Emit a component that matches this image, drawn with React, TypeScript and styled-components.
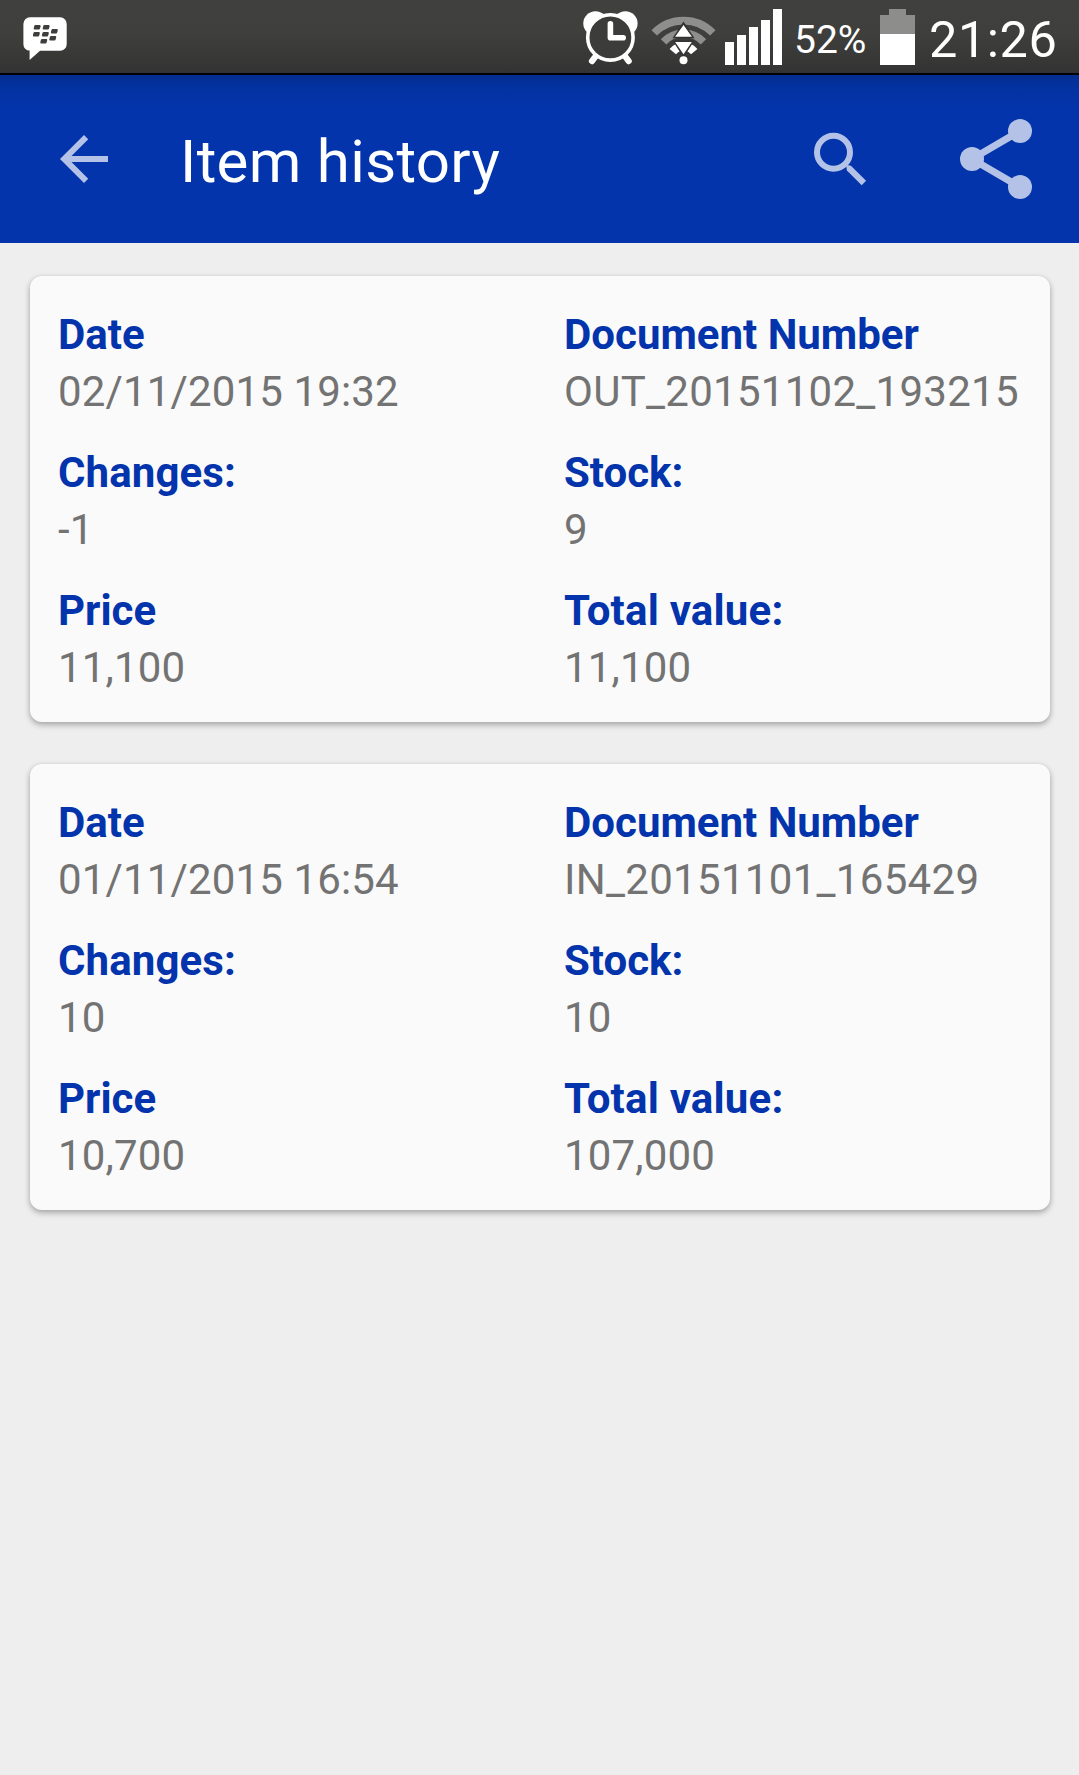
import React from "react";
import styled, { createGlobalStyle } from "styled-components";

const GlobalStyle = createGlobalStyle`
  * { box-sizing: border-box; }
  body {
    margin: 0;
    background: #eeeeee;
    font-family: Roboto, "Noto Sans", sans-serif;
  }
`;

const Screen = styled.div`
  display: flex;
  flex-direction: column;
  width: 1079px;
  min-height: 1775px;
  background: #eeeeee;
`;

const StatusBar = styled.header`
  display: flex;
  align-items: flex-start;
  justify-content: space-between;
  height: 75px;
  padding: 0 21px;
  color: #fff;
  border-bottom: 2px solid #000;
  background: linear-gradient(#40413e 0%, #3f403d 45%, #333333 100%);
`;

const StatusGroup = styled.div`
  display: flex;
  height: 73px;
`;

const StatusText = styled.span<{ $size: number; $line: number; $width: number; $tracking?: number }>`
  width: ${(p) => p.$width}px;
  font-size: ${(p) => p.$size}px;
  line-height: ${(p) => p.$line}px;
  letter-spacing: ${(p) => p.$tracking ?? 0}px;
  white-space: nowrap;
`;

const Toolbar = styled.nav`
  display: flex;
  align-items: flex-start;
  height: 168px;
  padding-left: 48px;
  padding-right: 42px;
  background: linear-gradient(#032e90 0, #0332a2 14px, #0334ac 38px);
`;

const Title = styled.h1`
  flex: 1;
  margin: 0 0 0 60px;
  font-size: 60px;
  font-weight: 400;
  line-height: 173px;
  letter-spacing: 0.32px;
  color: #fff;
`;

const IconButton = styled.button<{ $width: number }>`
  display: flex;
  width: ${(p) => p.$width}px;
  height: 168px;
  padding: 0;
  border: 0;
  background: none;
  color: #b3c2e6;
`;

const CardList = styled.main`
  display: flex;
  flex-direction: column;
  gap: 42px;
  padding: 33px 29px 0 30px;
`;

const Card = styled.article`
  display: grid;
  grid-template-columns: 506px 1fr;
  grid-auto-rows: 114px;
  row-gap: 24px;
  height: 446px;
  padding: 30px 0 0 28px;
  border-radius: 12px;
  background: #fafafa;
  box-shadow: 0 3px 6px rgba(0, 0, 0, 0.25), 0 1px 5px rgba(0, 0, 0, 0.1);
`;

const Field = styled.div`
  display: flex;
  flex-direction: column;
  font-size: 42px;
  line-height: 57px;
  white-space: nowrap;
`;

const Label = styled.span<{ $tracking?: number }>`
  font-weight: 700;
  color: #0334ac;
  letter-spacing: ${(p) => p.$tracking ?? 0}px;
`;

const Value = styled.span<{ $tracking?: number }>`
  color: #737373;
  letter-spacing: ${(p) => p.$tracking ?? 0.14}px;
`;

const MessengerIcon = () => (
  <svg width="50" height="73" viewBox="21 0 50 73">
    <path fill="#fff" d="M30 17.3h30.2a6.5 6.5 0 0 1 6.5 6.5v20.4a6.5 6.5 0 0 1-6.5 6.5H40L29.6 60v-9.4a6.3 6.3 0 0 1-6.2-6.4V23.8a6.5 6.5 0 0 1 6.6-6.5z" />
    <g fill="#3e3f3c">
      {[[33.8, 25], [42.8, 25], [33, 32], [42, 32], [51, 29], [49.4, 36], [40.4, 39]].map(([x, y]) => (
        <path key={`${x}-${y}`} d={`M${x + 1.8} ${y}h4q1.2 0 1 1.2l-.5 2q-.2 1.2-1.4 1.2h-4q-1.2 0-1-1.2l.5-2q.2-1.2 1.4-1.2z`} />
      ))}
    </g>
  </svg>
);

const AlarmIcon = () => (
  <svg width="67" height="73" viewBox="581 0 67 73" fill="none">
    <circle cx="595.5" cy="23.4" r="12.2" fill="#fff" />
    <circle cx="625.4" cy="23.4" r="12.2" fill="#fff" />
    <path d="M597 54.5l-5 6.6M623.7 54.5l5 6.6" stroke="#fff" strokeWidth="6.2" strokeLinecap="round" />
    <circle cx="610.4" cy="37.4" r="22.7" fill="#3c3d3a" stroke="#fff" strokeWidth="3.6" />
    <path d="M610.4 23.8v14h12.8" stroke="#fff" strokeWidth="5.6" strokeLinecap="round" strokeLinejoin="round" />
  </svg>
);

const WifiIcon = () => (
  <svg width="74" height="73" viewBox="648 0 74 73" fill="none">
    <g stroke="#8e8e8d" strokeWidth="7.6">
      <path d="M654.2 32.9A41 41 0 0 1 712.8 32.9" />
      <path d="M663.6 41.8A27.5 27.5 0 0 1 703.4 41.8" />
    </g>
    <path d="M672.8 51.6A14 14 0 0 1 694.2 51.6" stroke="#fff" strokeWidth="8.4" />
    <path d="M683.5 21.5l11 16.8h-22zM683.5 57.5l11-17h-22z" fill="#333" />
    <path d="M683.5 25l8.4 11.7h-16.8zM683.5 54.3l8.4-12.3h-16.8z" fill="#fff" />
    <circle cx="683.5" cy="60.3" r="4" fill="#fff" />
  </svg>
);

const SignalIcon = () => (
  <svg width="72" height="73" viewBox="722 0 72 73" fill="#fff">
    {[42, 35, 27, 20, 9].map((top, i) => (
      <rect key={top} x={725 + i * 12} y={top} width="9" height={65 - top} />
    ))}
  </svg>
);

const BatteryIcon = () => (
  <svg width="52" height="73" viewBox="877 0 52 73">
    <path fill="#8d8d8c" d="M889 9h17v6h9v19h-35V15h9z" />
    <path fill="#fff" d="M880 34h35v31h-35z" />
  </svg>
);

const BackIcon = () => (
  <svg width="72" height="168" viewBox="48 75 72 168">
    <path fill="currentColor" transform="translate(48 123) scale(3)" d="M20 11H7.83l5.59-5.59L12 4l-8 8 8 8 1.41-1.41L7.83 13H20v-2z" />
  </svg>
);

const SearchIcon = () => (
  <svg width="72" height="168" viewBox="805 75 72 168" fill="none" stroke="currentColor">
    <circle cx="833.5" cy="152.3" r="16.5" strokeWidth="6" />
    <path fill="currentColor" stroke="none" d="M846.3 166l1-1 3.6.8 15.2 15-4.4 4.4-14.8-14.8z" />
  </svg>
);

const ShareIcon = () => (
  <svg width="84" height="168" viewBox="953 75 84 168" fill="currentColor">
    <path d="M1020 131l-48 28 48 28" fill="none" stroke="currentColor" strokeWidth="7" />
    <circle cx="972" cy="159" r="12" />
    <circle cx="1020" cy="131" r="12" />
    <circle cx="1020" cy="187" r="12" />
  </svg>
);

type Entry = { text: string; value: string; labelTracking?: number; valueTracking?: number };

const records: Entry[][] = [
  [
    { text: "Date", value: "02/11/2015 19:32" },
    { text: "Document Number", value: "OUT_20151102_193215", valueTracking: 0.28 },
    { text: "Changes:", value: "-1", labelTracking: 0.1 },
    { text: "Stock:", value: "9" },
    { text: "Price", value: "11,100" },
    { text: "Total value:", value: "11,100", labelTracking: 0.2 },
  ],
  [
    { text: "Date", value: "01/11/2015 16:54" },
    { text: "Document Number", value: "IN_20151101_165429", valueTracking: 0.31 },
    { text: "Changes:", value: "10", labelTracking: 0.1 },
    { text: "Stock:", value: "10" },
    { text: "Price", value: "10,700" },
    { text: "Total value:", value: "107,000", labelTracking: 0.2 },
  ],
];

export default function App() {
  return (
    <>
      <GlobalStyle />
      <Screen>
        <StatusBar>
          <StatusGroup>
            <MessengerIcon />
          </StatusGroup>
          <StatusGroup>
            <AlarmIcon />
            <WifiIcon />
            <SignalIcon />
            <StatusText $size={39} $line={80} $width={83}>52%</StatusText>
            <BatteryIcon />
            <StatusText $size={50.5} $line={79} $width={129} $tracking={0.5}>21:26</StatusText>
          </StatusGroup>
        </StatusBar>
        <Toolbar>
          <IconButton $width={72} aria-label="Back"><BackIcon /></IconButton>
          <Title>Item history</Title>
          <IconButton $width={148} aria-label="Search"><SearchIcon /></IconButton>
          <IconButton $width={84} aria-label="Share"><ShareIcon /></IconButton>
        </Toolbar>
        <CardList>
          {records.map((fields, i) => (
            <Card key={i}>
              {fields.map((field) => (
                <Field key={field.text}>
                  <Label $tracking={field.labelTracking}>{field.text}</Label>
                  <Value $tracking={field.valueTracking}>{field.value}</Value>
                </Field>
              ))}
            </Card>
          ))}
        </CardList>
      </Screen>
    </>
  );
}
